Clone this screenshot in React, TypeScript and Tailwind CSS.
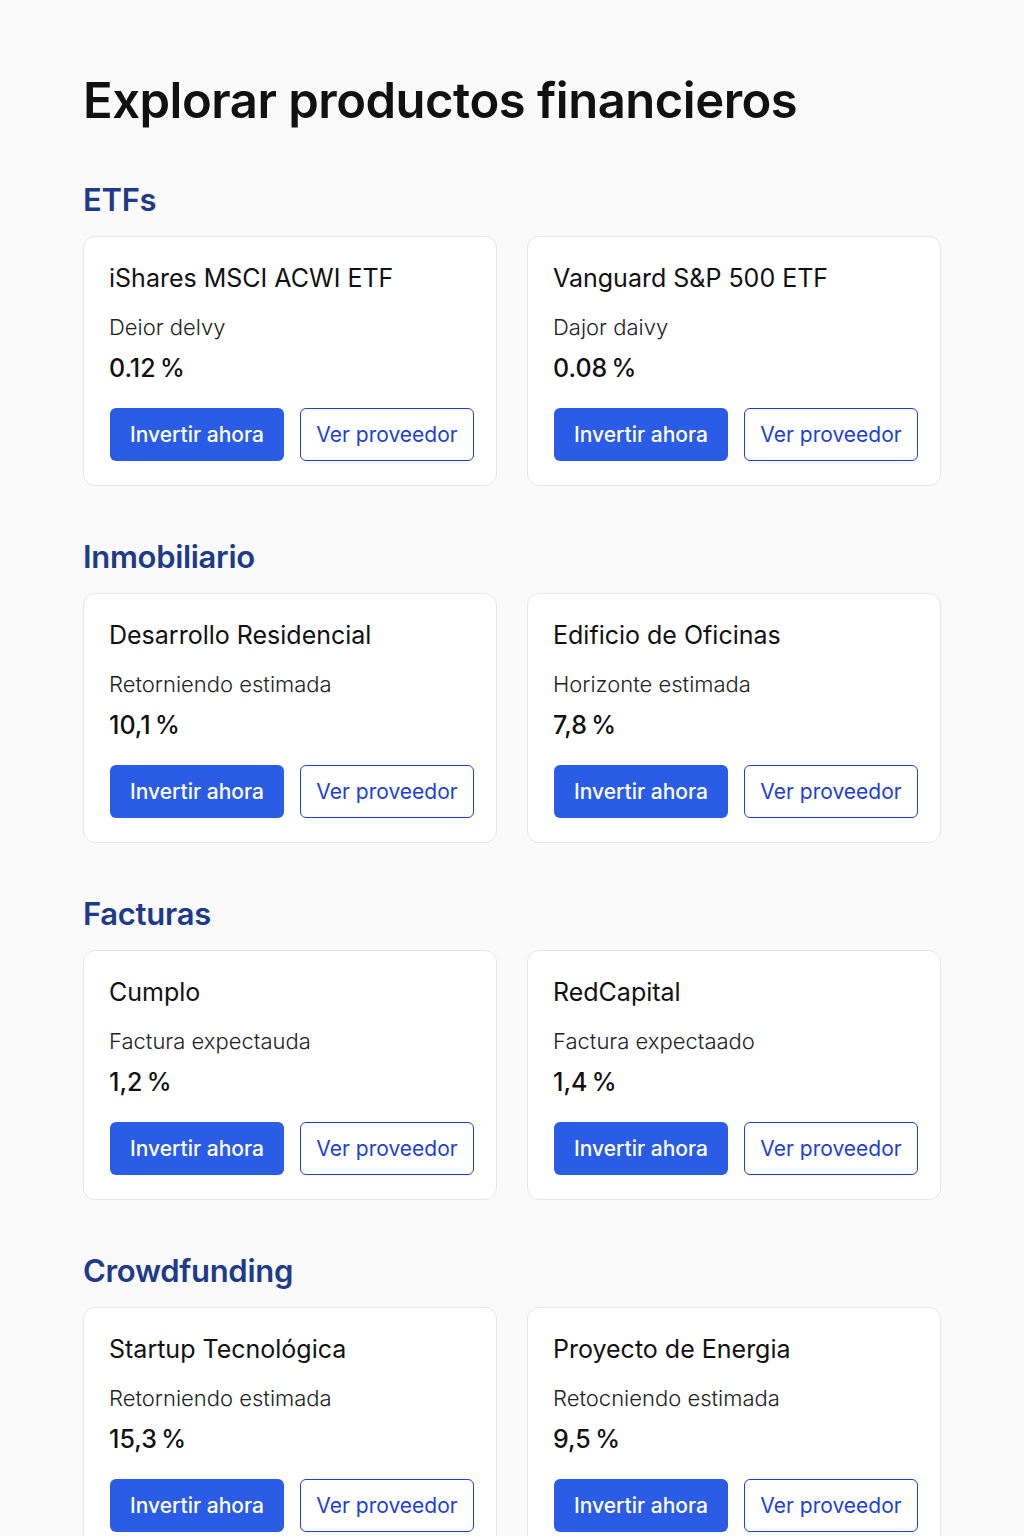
const sections = [
  {
    name: 'ETFs',
    items: [
      { title: 'iShares MSCI ACWI ETF', label: 'Deior delvy', value: '0.12\u2009%' },
      { title: 'Vanguard S&P 500 ETF', label: 'Dajor daivy', value: '0.08\u2009%' },
    ],
  },
  {
    name: 'Inmobiliario',
    items: [
      { title: 'Desarrollo Residencial', label: 'Retorniendo estimada', value: '10,1\u2009%' },
      { title: 'Edificio de Oficinas', label: 'Horizonte estimada', value: '7,8\u2009%' },
    ],
  },
  {
    name: 'Facturas',
    items: [
      { title: 'Cumplo', label: 'Factura expectauda', value: '1,2\u2009%' },
      { title: 'RedCapital', label: 'Factura expectaado', value: '1,4\u2009%' },
    ],
  },
  {
    name: 'Crowdfunding',
    items: [
      { title: 'Startup Tecnológica', label: 'Retorniendo estimada', value: '15,3\u2009%' },
      { title: 'Proyecto de Energia', label: 'Retocniendo estimada', value: '9,5\u2009%' },
    ],
  },
]

function ProductCard({ title, label, value }: { title: string; label: string; value: string }) {
  return (
    <div className="rounded-xl border border-gray-200 bg-white pl-[25px] pr-[22px] pt-[25px] pb-[24px]">
      <h3 className="text-[25px] leading-[32px] font-normal text-[#111]">{title}</h3>
      <p className="mt-[19px] text-[22px] leading-[28px] font-light text-[#222]">{label}</p>
      <p className="mt-[11px] text-[25px] leading-[32px] font-medium text-[#111]">{value}</p>
      <div className="mt-[24px] flex gap-4 pl-px">
        <button className="h-[53px] w-[174px] rounded-md bg-[#2a5ce6] text-[21px] font-medium text-white">
          Invertir ahora
        </button>
        <button className="h-[53px] w-[174px] rounded-md border border-[#1d3fd6] bg-white text-[21px] text-[#1d3fd6]">
          Ver proveedor
        </button>
      </div>
    </div>
  )
}

export default function App() {
  return (
    <div
      className="min-h-screen bg-[#fafafa] pt-[73px] pl-[83px] pr-[83px]"
      style={{ fontFamily: 'Inter, "Noto Sans", sans-serif' }}
    >
      <h1 className="text-[49px] leading-[56px] font-semibold tracking-[-0.5px] text-[#111]">
        Explorar productos financieros
      </h1>

      <div className="mt-[51px] flex flex-col gap-[51px]">
        {sections.map((s) => (
          <section key={s.name}>
            <h2 className="text-[31px] leading-[40px] font-semibold tracking-[-0.3px] text-[#1e3a8a]">{s.name}</h2>
            <div className="mt-[16px] grid grid-cols-[414px_414px] gap-[30px]">
              {s.items.map((it) => (
                <ProductCard key={it.title} {...it} />
              ))}
            </div>
          </section>
        ))}
      </div>
    </div>
  )
}
